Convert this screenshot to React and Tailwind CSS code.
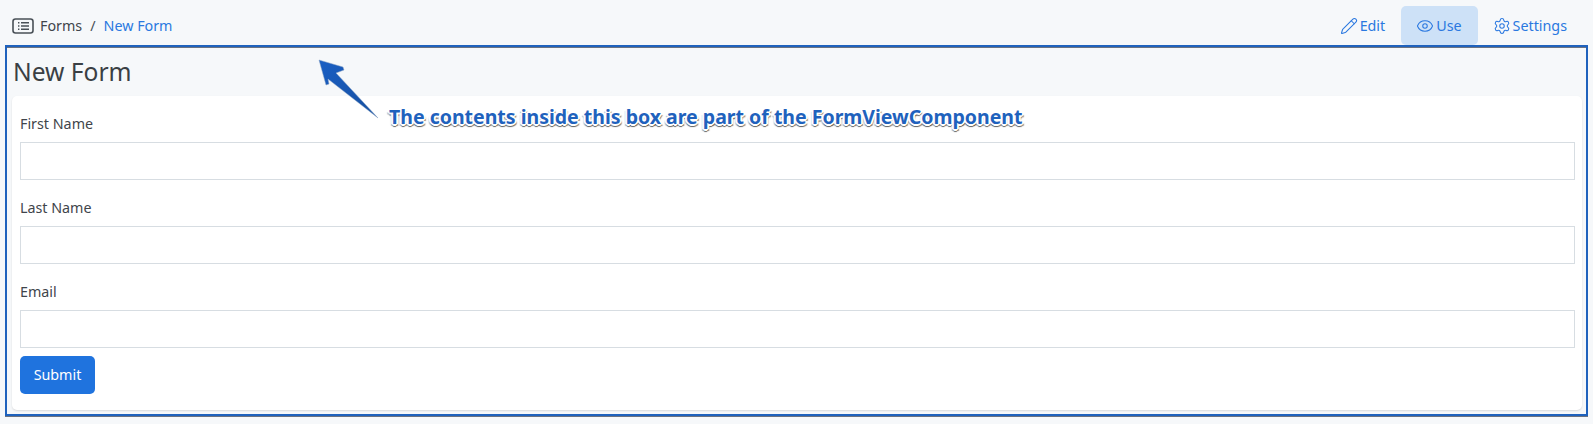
import React from "react";
import { Pencil, Eye, Settings } from "lucide-react";

const sans = "font-['Noto_Sans',sans-serif]";

function Field({ label }) {
  return (
    <div className="mb-[16px]">
      <label className="block h-[24px] mb-[6px] text-[14.3px] leading-[24px] text-[#3f454b]">{label}</label>
      <input type="text" className="block w-full h-[38px] border border-[#d7dde2] bg-white outline-none" />
    </div>
  );
}

function TabLink({ icon, label, active }) {
  return (
    <a className={`flex items-center gap-[2px] h-[39px] pt-[1px] rounded-[5px] text-[14.3px] text-[#2a78e0] ${active ? "bg-[#cde1f7] pl-[15px] pr-[16px]" : "px-[10px]"}`}>
      {icon}
      {label}
    </a>
  );
}

export default function App() {
  return (
    <div className={`relative w-[1593px] h-[424px] overflow-hidden bg-[#f6f8fa] ${sans}`}>
      {/* Breadcrumb and tabs */}
      <div className="flex items-start justify-between h-[45px] pl-[12px] pr-[16px]">
        <div className="flex items-center h-[52px] text-[14.3px] leading-none">
          <svg width="22" height="16" viewBox="0 0 22 16" className="mr-[6px]" fill="none" stroke="#495057">
            <rect x="1" y="1" width="20" height="14" rx="2.5" strokeWidth="1.6" />
            <path d="M6 4.7h1.4M6 8h1.4M6 11.300h1.400M9 4.700h8M9 8h8M9 11.300h8" strokeWidth="1.500" />
          </svg>
          <span className="text-[#3f454b]">Forms</span>
          <span className="mx-[8px] text-[#495057]">/</span>
          <span className="text-[#2a78e0]">New Form</span>
        </div>
        <div className="flex items-start pt-[6px]">
          <TabLink icon={<Pencil size={18} strokeWidth={1.4} />} label="Edit" />
          <div className="w-[6px]" />
          <TabLink icon={<Eye size={18} strokeWidth={1.4} />} label="Use" active />
          <div className="w-[5px]" />
          <TabLink icon={<Settings size={18} strokeWidth={1.4} />} label="Settings" />
        </div>
      </div>

      {/* FormViewComponent box */}
      <div className="mx-[5px] h-[371px] border-2 border-[#1f62bd] pl-[5px] pr-[4px] shadow-[0_1px_0_#6b7280,inset_0_1px_0_#6b7280]">
        <h1 className="h-[49px] pl-[1px] text-[24.6px] leading-[50px] text-[#3a3f44]">New Form</h1>
        <div className="h-[314px] bg-white rounded-[5px] pl-[8px] pr-[7px] pt-[16px] shadow-[0_1px_2px_rgba(0,0,0,0.12)]">
          <Field label="First Name" />
          <Field label="Last Name" />
          <Field label="Email" />
          <button className="block w-[75px] h-[38px] -mt-[8px] bg-[#1f73de] rounded-[5px] text-white text-[14.3px]">Submit</button>
        </div>
      </div>

      {/* Annotation */}
      <svg width="1593" height="424" className="absolute left-0 top-0 pointer-events-none">
        <defs>
          <linearGradient id="arrowFill" x1="0" y1="0" x2="1" y2="1">
            <stop offset="0" stopColor="#1a5fc4" />
            <stop offset="1" stopColor="#164f9f" />
          </linearGradient>
        </defs>
        <polygon
          points="319,60 343,67 344,70 336,73 378,118 328,79 329,84 326,85"
          fill="url(#arrowFill)"
          stroke="#8fa6c4"
          strokeWidth="0.5"
          strokeLinejoin="round"
        />
      </svg>
      <div className="absolute left-[389px] top-[103px] text-[19.500px] leading-[28px] font-bold whitespace-nowrap text-[#1f62bd] [text-shadow:1px_0_0_#fff,-1px_0_0_#fff,0_-1px_0_#fff,0_1px_0_#fff,1px_1px_0_#fff,-1px_1px_0_#fff,1px_-1px_0_#fff,-1px_-1px_0_#fff,2px_0_0_#fff,-2px_0_0_#fff,0_2px_0_#fff,0_3px_1px_rgba(0,0,0,0.6),2px_2px_1px_rgba(0,0,0,0.5),-2px_2px_1px_rgba(0,0,0,0.3)]">
        The contents inside this box are part of the FormViewComponent
      </div>
    </div>
  );
}
